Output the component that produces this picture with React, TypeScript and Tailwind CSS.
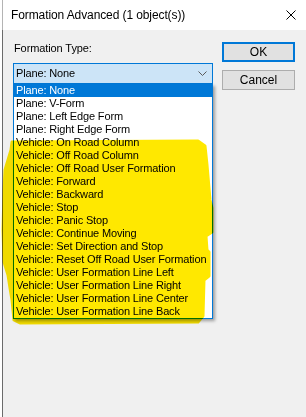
import React from 'react'

const items = [
  'Plane: None',
  'Plane: V-Form',
  'Plane: Left Edge Form',
  'Plane: Right Edge Form',
  'Vehicle: On Road Column',
  'Vehicle: Off Road Column',
  'Vehicle: Off Road User Formation',
  'Vehicle: Forward',
  'Vehicle: Backward',
  'Vehicle: Stop',
  'Vehicle: Panic Stop',
  'Vehicle: Continue Moving',
  'Vehicle: Set Direction and Stop',
  'Vehicle: Reset Off Road User Formation',
  'Vehicle: User Formation Line Left',
  'Vehicle: User Formation Line Right',
  'Vehicle: User Formation Line Center',
  'Vehicle: User Formation Line Back',
]

// highlighter stroke drawn over the vehicle entries
const marker =
  'M12,142 L198,141 L205,146 L207,165 L210,200 L212,208 L212,232 L206,236 L207,250 L209,252 L209,276 L204,280 L203,316 L198,322 L20,323 L14,320 L12,300 L10,288 L8,275 L4,262 L3,230 L4,190 L5,170 L8,160 L11,150 Z'

export default function App() {
  return (
    <div
      className="relative w-[306px] h-[417px] flex flex-col bg-white text-black overflow-hidden"
      style={{ fontFamily: '"Liberation Sans", Arial, sans-serif' }}
    >
      {/* title bar */}
      <div className="h-[30px] shrink-0 flex items-center pl-[8px] pr-[10px] bg-white border-l border-[#b4b4b4] ml-[2px]">
        <span className="text-[12px] flex-1 tracking-[-0.1px]">Formation Advanced (1 object(s))</span>
        <svg width="10" height="10" viewBox="0 0 10 10">
          <path d="M0.5,0.5 L9.5,9.5 M9.5,0.5 L0.5,9.5" stroke="#000" strokeWidth="1" />
        </svg>
      </div>

      {/* client area */}
      <div className="flex-1 flex bg-[#f0f0f0] border-l border-[#6b6b6b] ml-[2px] pt-[12px]">
        <div className="relative w-[200px] ml-[10px]">
          <div className="h-[12px] leading-[12px] text-[11px] pl-[1px] tracking-[-0.1px]">Formation Type:</div>
          <div className="mt-[9px] h-[21px] flex items-center border border-[#0078d7] bg-[#cce4f7] pl-[2px] pr-[5px] text-[11px] tracking-[-0.15px]">
            <span className="flex-1">Plane: None</span>
            <svg width="9" height="5" viewBox="0 0 9 5">
              <path d="M0.5,0.5 L4.5,4.5 L8.5,0.5" stroke="#5a5a5a" strokeWidth="1" fill="none" />
            </svg>
          </div>

          {/* open drop-down list */}
          <div className="absolute left-0 top-[42px] w-[200px] flex flex-col bg-white border-x border-b border-[#0078d7] shadow-[2px_2px_3px_rgba(0,0,0,0.35)] text-[11px] tracking-[-0.15px]">
            {items.map((t, i) => (
              <div
                key={t}
                className={
                  i === 0
                    ? 'h-[13px] leading-[13px] pl-[2px] bg-[#0078d7] text-white whitespace-nowrap'
                    : 'h-[13px] leading-[13px] pl-[2px] whitespace-nowrap'
                }
              >
                {t}
              </div>
            ))}
          </div>
        </div>

        <div className="ml-[9px] w-[73px] flex flex-col gap-[8px] text-[12px]">
          <button className="h-[20px] border-2 border-[#0078d7] bg-[#e1e1e1] flex items-center justify-center">OK</button>
          <button className="h-[20px] border border-[#adadad] bg-[#e1e1e1] flex items-center justify-center">Cancel</button>
        </div>
      </div>

      <svg
        className="absolute left-0 top-0 pointer-events-none mix-blend-multiply"
        width="306"
        height="417"
        viewBox="0 0 306 417"
      >
        <path d={marker} fill="#ffe800" stroke="#ffe800" strokeWidth="3" strokeLinejoin="round" />
      </svg>
    </div>
  )
}
